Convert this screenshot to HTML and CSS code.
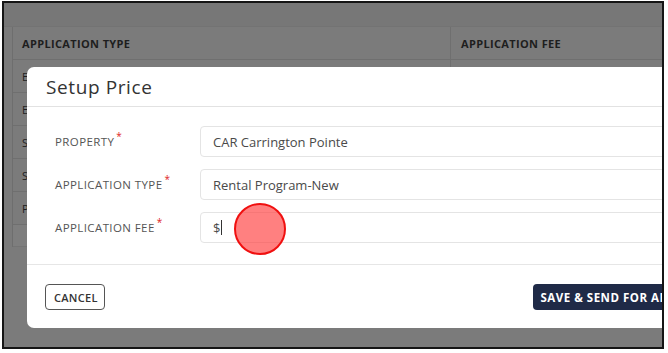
FILE: index.html
```html
<!DOCTYPE html>
<html lang="en">

<head>
    <meta charset="UTF-8">
    <meta name="viewport" content="width=device-width, initial-scale=1.0">
    <title>Setup Price</title>
    <link rel="stylesheet" href="styles.css">
</head>

<body>
    <div class="frame">
        <!-- page behind the dialog, dimmed -->
        <div class="page">
            <div class="top-band"></div>
            <div class="grid">
                <div class="grid-row grid-head">
                    <div class="cell cell-type">APPLICATION TYPE</div>
                    <div class="cell cell-fee">APPLICATION FEE</div>
                </div>
                <div class="grid-row">
                    <div class="cell cell-type">E</div>
                    <div class="cell cell-fee"></div>
                </div>
                <div class="grid-row">
                    <div class="cell cell-type">E</div>
                    <div class="cell cell-fee"></div>
                </div>
                <div class="grid-row">
                    <div class="cell cell-type">S</div>
                    <div class="cell cell-fee"></div>
                </div>
                <div class="grid-row">
                    <div class="cell cell-type">S</div>
                    <div class="cell cell-fee"></div>
                </div>
                <div class="grid-row">
                    <div class="cell cell-type">P</div>
                    <div class="cell cell-fee"></div>
                </div>
                <div class="grid-foot"></div>
            </div>
        </div>

        <div class="modal">
            <div class="modal-header">
                <h2>Setup Price</h2>
            </div>
            <div class="modal-body">
                <div class="form-row">
                    <label class="form-label">PROPERTY<span class="req">*</span></label>
                    <div class="form-input">CAR Carrington Pointe</div>
                </div>
                <div class="form-row">
                    <label class="form-label">APPLICATION TYPE<span class="req">*</span></label>
                    <div class="form-input">Rental Program-New</div>
                </div>
                <div class="form-row">
                    <label class="form-label">APPLICATION FEE<span class="req">*</span></label>
                    <div class="form-input">$<span class="caret"></span></div>
                </div>
            </div>
            <div class="modal-footer">
                <button class="btn btn-cancel">CANCEL</button>
                <button class="btn btn-save">SAVE &amp; SEND FOR APPROVAL</button>
            </div>
        </div>

        <!-- click marker -->
        <div class="click-dot"></div>
    </div>
</body>

</html>
```

FILE: styles.css
```css
* {
    margin: 0;
    padding: 0;
    box-sizing: border-box;
}

body {
    background: #ffffff;
    font-family: 'Open Sans', 'DejaVu Sans', sans-serif;
}

.frame {
    position: relative;
    margin: 1px 0 0 2px;
    width: 662px;
    height: 348px;
    border: 2px solid #151515;
    overflow: hidden;
    background: #7b7b7b;
}

.top-band {
    height: 24px;
    background: #777777;
    border-bottom: 1px solid #737373;
}

.grid {
    margin-left: 8px;
    border-left: 1px solid #6e6e6e;
}

.grid-row {
    display: flex;
    height: 33px;
    border-bottom: 1px solid #6f6f6f;
}

.cell {
    display: flex;
    align-items: center;
    padding-left: 9px;
    font-size: 11px;
    color: #1e1e1e;
}

.grid-head .cell {
    font-weight: 700;
    letter-spacing: 0.35px;
}

.cell-type {
    width: 438px;
    border-right: 1px solid #6f6f6f;
}

.cell-fee {
    flex: 1;
    padding-left: 10px;
}

.grid-foot {
    height: 22px;
    background: #7e7e7e;
    border-bottom: 1px solid #747474;
}

/* dialog */
.modal {
    position: absolute;
    left: 23px;
    top: 64px;
    width: 715px;
    height: 261px;
    background: #ffffff;
    border-radius: 7px;
}

.modal-header {
    height: 40px;
    padding: 7px 19px 0;
    border-bottom: 1px solid #e2e2e2;
}

.modal-header h2 {
    font-size: 19px;
    font-weight: 400;
    color: #333333;
    letter-spacing: 0.6px;
}

.modal-body {
    display: flex;
    flex-direction: column;
    gap: 12px;
    padding: 19px 28px 21px;
    border-bottom: 1px solid #e6e6e6;
}

.form-row {
    display: flex;
    align-items: center;
}

.form-label {
    width: 145px;
    font-size: 11.5px;
    font-weight: 500;
    color: #555555;
    letter-spacing: 0.4px;
    line-height: 14px;
}

.req {
    position: relative;
    top: -6px;
    color: #e02424;
    font-size: 10px;
    margin-left: 2px;
}

.form-input {
    flex: 1;
    height: 31px;
    display: flex;
    align-items: center;
    padding-left: 12px;
    border: 1px solid #e4e4e4;
    border-radius: 4px;
    font-size: 13px;
    font-weight: 500;
    color: #4a4a4a;
}

.caret {
    display: inline-block;
    width: 1px;
    height: 15px;
    background: #333333;
    margin-left: 1px;
}

.modal-footer {
    display: flex;
    justify-content: space-between;
    padding: 19px 18px 0;
}

.btn {
    height: 26px;
    border-radius: 4px;
    font-family: inherit;
    font-size: 11px;
    font-weight: 600;
    padding: 0 8px;
    letter-spacing: 0.3px;
}

.btn-cancel {
    width: 60px;
    background: #ffffff;
    border: 1px solid #555555;
    color: #333333;
}

.btn-save {
    background: #1f2a47;
    border: none;
    color: #ffffff;
    font-size: 11.5px;
    font-weight: 700;
    letter-spacing: 0.5px;
}

.click-dot {
    position: absolute;
    left: 230px;
    top: 200px;
    width: 52px;
    height: 52px;
    border-radius: 50%;
    background: rgba(255, 60, 60, 0.65);
    border: 2px solid #f01010;
}
```
